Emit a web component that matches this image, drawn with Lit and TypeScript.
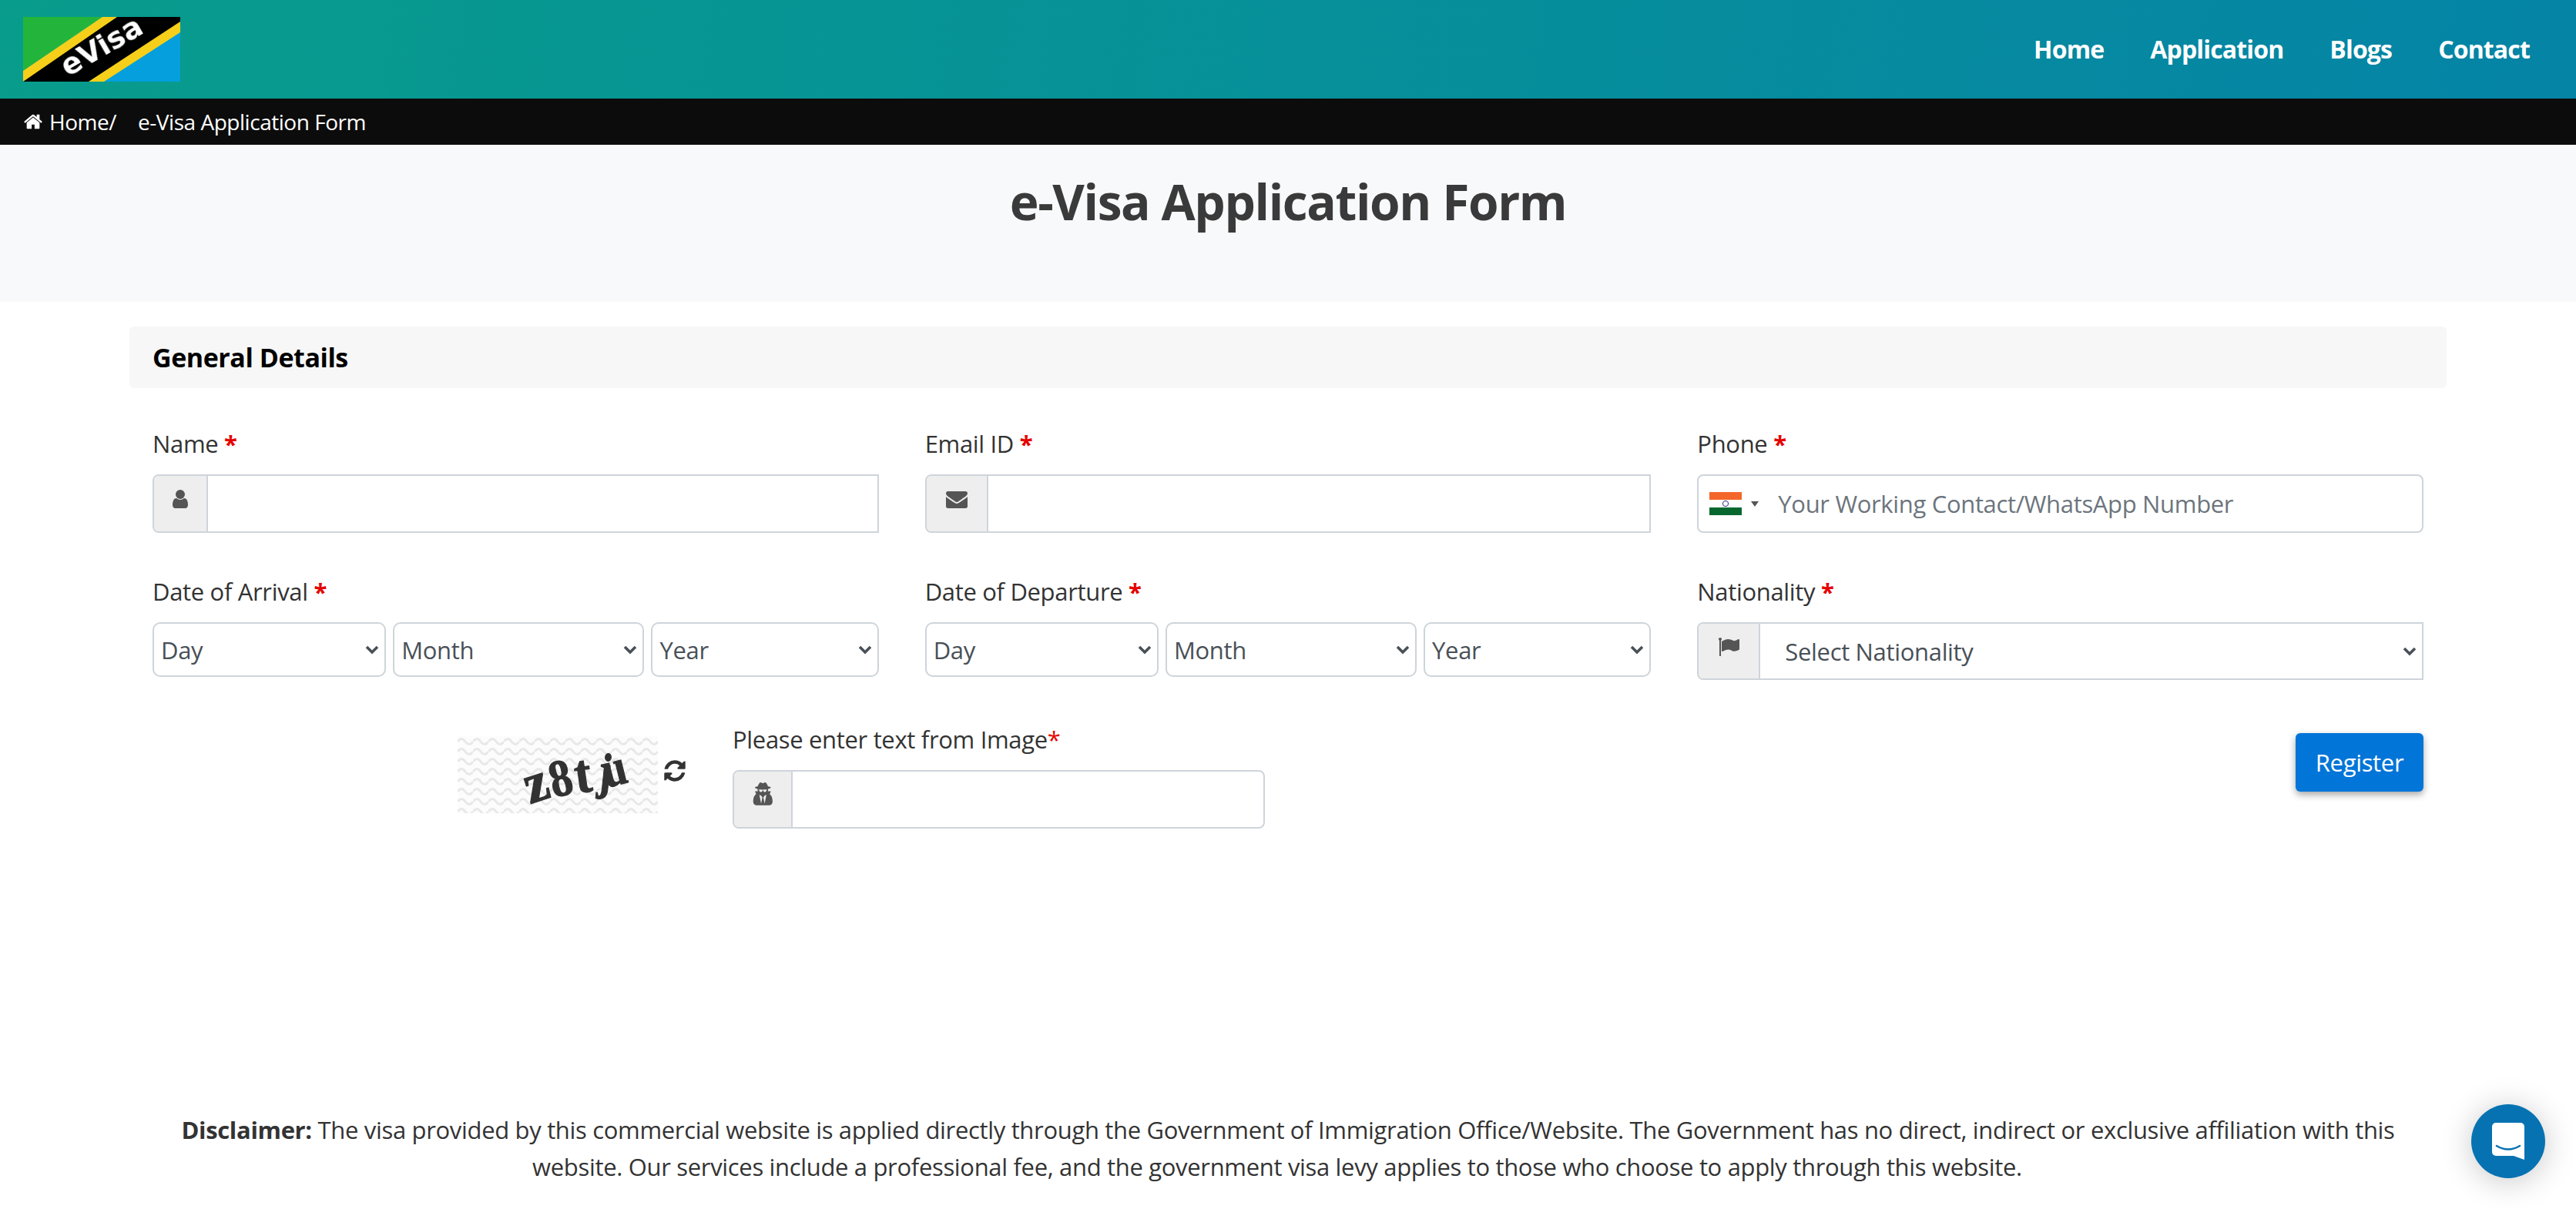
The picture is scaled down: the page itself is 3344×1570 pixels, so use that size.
import { LitElement, html, css } from "lit";
import { customElement } from "lit/decorators.js";

const ic = (vb: string, d: string, cls = "") =>
  html`<svg class=${cls} viewBox=${vb} fill="currentColor"><path d=${d}></path></svg>`;
const USER = "M1536 1399q0 109-62.5 187t-150.5 78h-854q-88 0-150.5-78t-62.5-187q0-85 8.5-160.5t31.5-152 58.5-131 94-89 134.5-34.5q131 128 313 128t313-128q76 0 134.5 34.5t94 89 58.5 131 31.5 152 8.5 160.5zm-256-887q0 159-112.5 271.5t-271.5 112.5-271.5-112.5-112.5-271.5 112.5-271.5 271.5-112.5 271.5 112.5 112.5 271.5z";
const MAIL = "M1792 710v794q0 66-47 113t-113 47h-1472q-66 0-113-47t-47-113v-794q44 49 101 87 362 246 497 345 57 42 92.5 65.5t94.5 48 110 24.5h2q51 0 110-24.5t94.5-48 92.5-65.5q170-123 498-345 57-39 100-87zm0-294q0 79-49 151t-122 123q-376 261-468 325-10 7-42.5 30.5t-54 38-52 32.5-57.5 27-50 9h-2q-23 0-50-9t-57.5-27-52-32.5-54-38-42.5-30.5q-91-64-262-182.5t-205-142.5q-62-42-117-115.5t-55-136.5q0-78 41.5-130t118.5-52h1472q65 0 112.5 46t47.5 110z";
const HOME = "M1472 992v480q0 26-19 45t-45 19h-384v-384h-256v384h-384q-26 0-45-19t-19-45v-480q0-1 .5-3t.5-3l575-474 575 474q1 2 1 6zm223-69l-62 74q-8 9-21 11h-3q-13 0-21-7l-692-577-692 577q-12 8-24 7-13-2-21-11l-62-74q-8-10-7-23.5t11-21.5l719-599q32-26 76-26t76 26l244 204v-195q0-14 9-23t23-9h192q14 0 23 9t9 23v408l219 182q10 8 11 21.5t-7 23.5z";
const FLAG = "M320 256q0 72-64 110v1266q0 13-9.5 22.5t-22.5 9.5h-64q-13 0-22.5-9.5t-9.5-22.5v-1266q-64-38-64-110 0-53 37.5-90.5t90.5-37.5 90.5 37.5 37.5 90.5zm1472 64v763q0 25-12.5 38.5t-39.5 27.5q-215 116-369 116-61 0-123.5-22t-108.5-48-115.5-48-142.5-22q-192 0-464 146-17 9-33 9-26 0-45-19t-19-45v-742q0-32 31-55 21-14 79-43 236-120 421-120 107 0 200 29t219 88q38 19 88 19 54 0 117.5-21t110-47 88-47 54.5-21q26 0 45 19t19 45z";
const REFRESH = "M1639 1056q0 5-1 7-64 268-268 434.5t-478 166.5q-146 0-282.5-55t-243.5-157l-129 129q-19 19-45 19t-45-19-19-45v-448q0-26 19-45t45-19h448q26 0 45 19t19 45-19 45l-137 137q71 66 161 102t187 36q134 0 250-65t186-179q11-17 53-117 8-23 30-23h192q13 0 22.5 9.5t9.5 22.5zm25-800v448q0 26-19 45t-45 19h-448q-26 0-45-19t-19-45 19-45l138-138q-148-137-349-137-134 0-250 65t-186 179q-11 17-53 117-8 23-30 23h-199q-13 0-22.5-9.5t-9.5-22.5v-7q65-268 270-434.5t480-166.5q146 0 284 55.5t245 156.5l130-129q19-19 45-19t45 19 19 45z";
const SPY = "M657 1536l96-448-96-128-128-64zm256 0l128-640-128 64-96 128zm160-1010q-2-4-4-6-10-8-96-8-70 0-167 19-7 2-21 2t-21-2q-97-19-167-19-86 0-96 8-2 2-4 6 2 18 4 27 2 3 7.5 6.5t7.5 10.5q2 4 7.5 20.5t7 20.5 7.5 17 8.5 17 9 14 12 13.5 14 9.5 17.5 8 20.5 4 24.5 2q36 0 59-12.5t32.5-30 14.5-34.5 11.5-29.5 17.5-12.5h12q11 0 17.5 12.5t11.5 29.5 14.5 34.5 32.5 30 59 12.5q13 0 24.5-2t20.5-4 17.5-8 14-9.5 12-13.5 9-14 8.5-17 7.5-17 7-20.5 7.5-20.5q2-7 7.5-10.5t7.5-6.5q2-9 4-27zm416 879q0 121-73 190t-194 69h-874q-121 0-194-69t-73-190q0-61 4.5-118t19-125.5 37.5-123.5 63.5-103.5 93.5-74.5l-90-220h214q-22-64-22-128 0-12 2-32-194-40-194-96 0-57 210-99 17-62 51.5-134t70.5-114q32-37 76-37 30 0 84 31t84 31 84-31 84-31q44 0 76 36 36 42 70.5 114t51.5 134q210 42 210 99 0 56-194 96 7 81-20 160h214l-82 225q63 33 107.5 96.5t65.5 143.5 29 151.5 8 148.5z";

@customElement("app-root")
export class AppRoot extends LitElement {
  static styles = css`
    :host { display: block; font-family: "Open Sans", "Noto Sans", sans-serif; color: #333; height: 1570px; overflow: hidden; background: #fff; }
    * { box-sizing: border-box; }
    .top { height: 128px; background: linear-gradient(100deg, #089c8c 0%, #0584a6 100%); display: flex; align-items: center; justify-content: space-between; padding: 0 60px 0 30px; }
    .logo { width: 204px; height: 84px; display: block; }
    nav { display: flex; gap: 60px; }
    nav a { color: #fff; font-size: 32px; font-weight: 700; letter-spacing: -0.85px; line-height: 48px; }
    .crumb { height: 60px; background: #0c0c0c; color: #fff; display: flex; align-items: center; padding-left: 30px; font-size: 28px; letter-spacing: -0.47px; }
    .crumb svg { width: 26px; height: 26px; margin-right: 8px; }
    .crumb .cur { margin-left: 28px; }
    .hero { height: 204px; background: #f8f9fa; padding-top: 40px; text-align: center; }
    h1 { margin: 0; font-size: 64px; line-height: 68px; font-weight: 700; color: #3a3a3a; letter-spacing: -1.4px; }
    .bar { margin: 32px 168px 0; height: 80px; background: #f7f7f7; border-radius: 6px; padding-left: 30px; display: flex; align-items: center; font-size: 34px; font-weight: 700; color: #000; letter-spacing: -0.45px; }
    .grid { margin: 49px 168px 0; display: grid; grid-template-columns: repeat(3, 1fr); }
    .field { padding: 0 30px; height: 192px; }
    label { display: block; height: 48px; line-height: 46px; font-size: 31px; margin-bottom: 15px; letter-spacing: -0.33px; white-space: nowrap; }
    label b { color: #e60000; font-weight: 700; }
    label i { color: #e60000; font-style: normal; }
    .group { display: flex; height: 76px; border: 2px solid #ced4da; border-radius: 8px; overflow: hidden; background: #fff; }
    .group.square { border-radius: 8px 0 0 8px; }
    .group.nat { height: 75px; }
    .addon { background: #eee; border-right: 2px solid #ced4da; flex: none; display: flex; justify-content: center; color: #555; }
    .addon svg { width: 28px; height: 32px; margin-top: 14px; }
    input, select { border: 0; outline: 0; background: transparent; font: inherit; flex: 1; min-width: 0; }
    input { padding: 0 20px; font-size: 31px; letter-spacing: -0.33px; }
    input::placeholder { color: #6c757d; opacity: 1; }
    select { appearance: none; color: #495057; font-size: 31px; letter-spacing: -0.33px; background-image: url("data:image/svg+xml,%3Csvg xmlns='http://www.w3.org/2000/svg' viewBox='0 0 18 12'%3E%3Cpath d='M2 2l7 7 7-7' fill='none' stroke='%23495057' stroke-width='3.6'/%3E%3C/svg%3E"); background-repeat: no-repeat; background-size: 18px 12px; background-position: right 7px center; }
    .dates { display: grid; grid-template-columns: 303fr 326fr 295fr; gap: 9px; }
    .dates select { height: 71px; width: 100%; border: 2px solid #ced4da; border-radius: 10px; padding-left: 9px; }
    .nat select { padding-left: 32px; }
    .flag { flex: none; display: flex; align-items: center; padding-left: 14px; gap: 12px; }
    .flag .tri { width: 0; height: 0; border-left: 5px solid transparent; border-right: 5px solid transparent; border-top: 7px solid #555; }
    .phone .flag { width: 83px; }
    .flag svg { width: 42px; height: 30px; flex: none; display: block; }
    .row3 { margin: 0 168px; padding-left: 426px; display: flex; align-items: flex-start; height: 140px; }
    .cap { width: 260px; height: 100px; margin-top: 19px; display: block; flex: none; }
    .ref { width: 32px; height: 32px; margin: 48px 0 0 6px; color: #333; flex: none; }
    .cfield { width: 691px; margin-left: 59px; }
    .cfield .addon { width: 76px; }
    .btn { margin: 15px 30px 0 auto; width: 166px; height: 76px; border: 0; border-radius: 6px; background: #0275d8; color: #fff; font: inherit; font-size: 31px; letter-spacing: -0.33px; box-shadow: 0 4px 10px rgba(0,0,0,.35); }
    .disc { margin: 366px 200px 0; text-align: center; font-size: 31px; line-height: 48px; letter-spacing: -0.33px; }
    .disc .l2 { padding-right: 28px; }
    .chat { position: fixed; right: 40px; bottom: 40px; width: 96px; height: 96px; border-radius: 50%; background: #0672b2; box-shadow: 0 4px 40px rgba(0,0,0,.22); display: flex; align-items: center; justify-content: center; }
    .chat svg { width: 42px; height: 48px; display: block; }
  `;

  sel(names: string[]) {
    return html`<div class="dates">${names.map((n) => html`<select><option>${n}</option></select>`)}</div>`;
  }

  render() {
    return html`
      <div class="top">
        <svg class="logo" viewBox="0 0 204 84" role="img" aria-label="eVisa logo">
          <defs><filter id="lb"><feGaussianBlur stdDeviation=".5"></feGaussianBlur></filter></defs>
          <rect width="204" height="84" fill="#049fdc"></rect>
          <polygon points="0,0 103,0 0,70" fill="#23b53b"></polygon>
          <polygon points="0,70 103,0 204,0 204,20 105,84 0,84" fill="#f5cf1a"></polygon>
          <polygon points="0,84 122,0 204,0 204,6 85,84" fill="#000"></polygon>
          <text transform="translate(58 78) rotate(-30)" font-family="DejaVu Sans" font-weight="700" font-size="38" fill="#fff" filter="url(#lb)">eVisa</text>
        </svg>
        <nav><a>Home</a><a>Application</a><a>Blogs</a><a>Contact</a></nav>
      </div>
      <div class="crumb">${ic("0 0 1792 1792", HOME)}<span>Home/</span><span class="cur">e-Visa Application Form</span></div>
      <div class="hero"><h1>e-Visa Application Form</h1></div>
      <div class="bar">General Details</div>
      <div class="grid">
        <div class="field"><label>Name <b>*</b></label>
          <div class="group square"><span class="addon" style="width:70px">${ic("0 0 1792 1792", USER)}</span><input /></div></div>
        <div class="field"><label>Email ID <b>*</b></label>
          <div class="group square"><span class="addon" style="width:80px">${ic("0 0 1792 1792", MAIL)}</span><input /></div></div>
        <div class="field"><label>Phone <b>*</b></label>
          <div class="group phone"><span class="flag">
            <svg viewBox="0 0 42 30"><rect width="42" height="10" fill="#f4672a"></rect><rect y="10" width="42" height="10" fill="#fff"></rect><rect y="20" width="42" height="10" fill="#07672f"></rect><circle cx="21" cy="15" r="3.6" fill="none" stroke="#2c2c8c" stroke-width="1"></circle></svg>
            <span class="tri"></span></span><input placeholder="Your Working Contact/WhatsApp Number" /></div></div>
        <div class="field"><label>Date of Arrival <b>*</b></label>${this.sel(["Day", "Month", "Year"])}</div>
        <div class="field"><label>Date of Departure <b>*</b></label>${this.sel(["Day", "Month", "Year"])}</div>
        <div class="field"><label>Nationality <b>*</b></label>
          <div class="group square nat"><span class="addon" style="width:80px">${ic("0 0 1792 1792", FLAG)}</span><select><option>Select Nationality</option></select></div></div>
      </div>
      <div class="row3">
        <svg class="cap" viewBox="0 0 260 100" role="img" aria-label="captcha">
          <defs>
            <pattern id="w" width="20" height="13" patternUnits="userSpaceOnUse"><path d="M0 7q5-7 10 0t10 0" fill="none" stroke="#e8e8e8" stroke-width="3"></path></pattern>
            <filter id="b"><feGaussianBlur stdDeviation=".7"></feGaussianBlur></filter>
          </defs>
          <rect width="260" height="100" fill="#fcfcfc"></rect>
          <rect width="260" height="100" fill="url(#w)"></rect>
          <g font-family="Liberation Serif" font-weight="700" fill="#333" stroke="#333" stroke-width="1.2" filter="url(#b)">
            <text transform="translate(94 88) rotate(-18) scale(1.05 1.1)" font-size="66">z</text>
            <text transform="translate(125 80) rotate(-14) scale(.85 1)" font-size="68">8</text>
            <text transform="translate(155 74) rotate(-8) scale(.95 1.05)" font-size="68">t</text>
            <text transform="translate(181 67) rotate(6) scale(.8 1)" font-size="66">j</text>
            <text transform="translate(193 67) rotate(-14) scale(.85 1)" font-size="66">u</text>
          </g>
        </svg>
        ${ic("0 0 1792 1792", REFRESH, "ref")}
        <div class="cfield"><label>Please enter text from Image<i>*</i></label>
          <div class="group"><span class="addon">${ic("0 0 1536 1792", SPY)}</span><input /></div></div>
        <button class="btn">Register</button>
      </div>
      <div class="disc"><b>Disclaimer:</b> The visa provided by this commercial website is applied directly through the Government of Immigration Office/Website. The Government has no direct, indirect or exclusive affiliation with this<br /><span class="l2">website. Our services include a professional fee, and the government visa levy applies to those who choose to apply through this website.</span></div>
      <div class="chat"><svg viewBox="0 0 42 48">
        <path d="M5 0h32a5 5 0 0 1 5 5v43l-14-5H5a5 5 0 0 1-5-5V5a5 5 0 0 1 5-5z" fill="#fff"></path>
        <path d="M6 30q15 9 30 0" fill="none" stroke="#0672b2" stroke-width="2.6" stroke-linecap="round"></path></svg></div>
    `;
  }
}
